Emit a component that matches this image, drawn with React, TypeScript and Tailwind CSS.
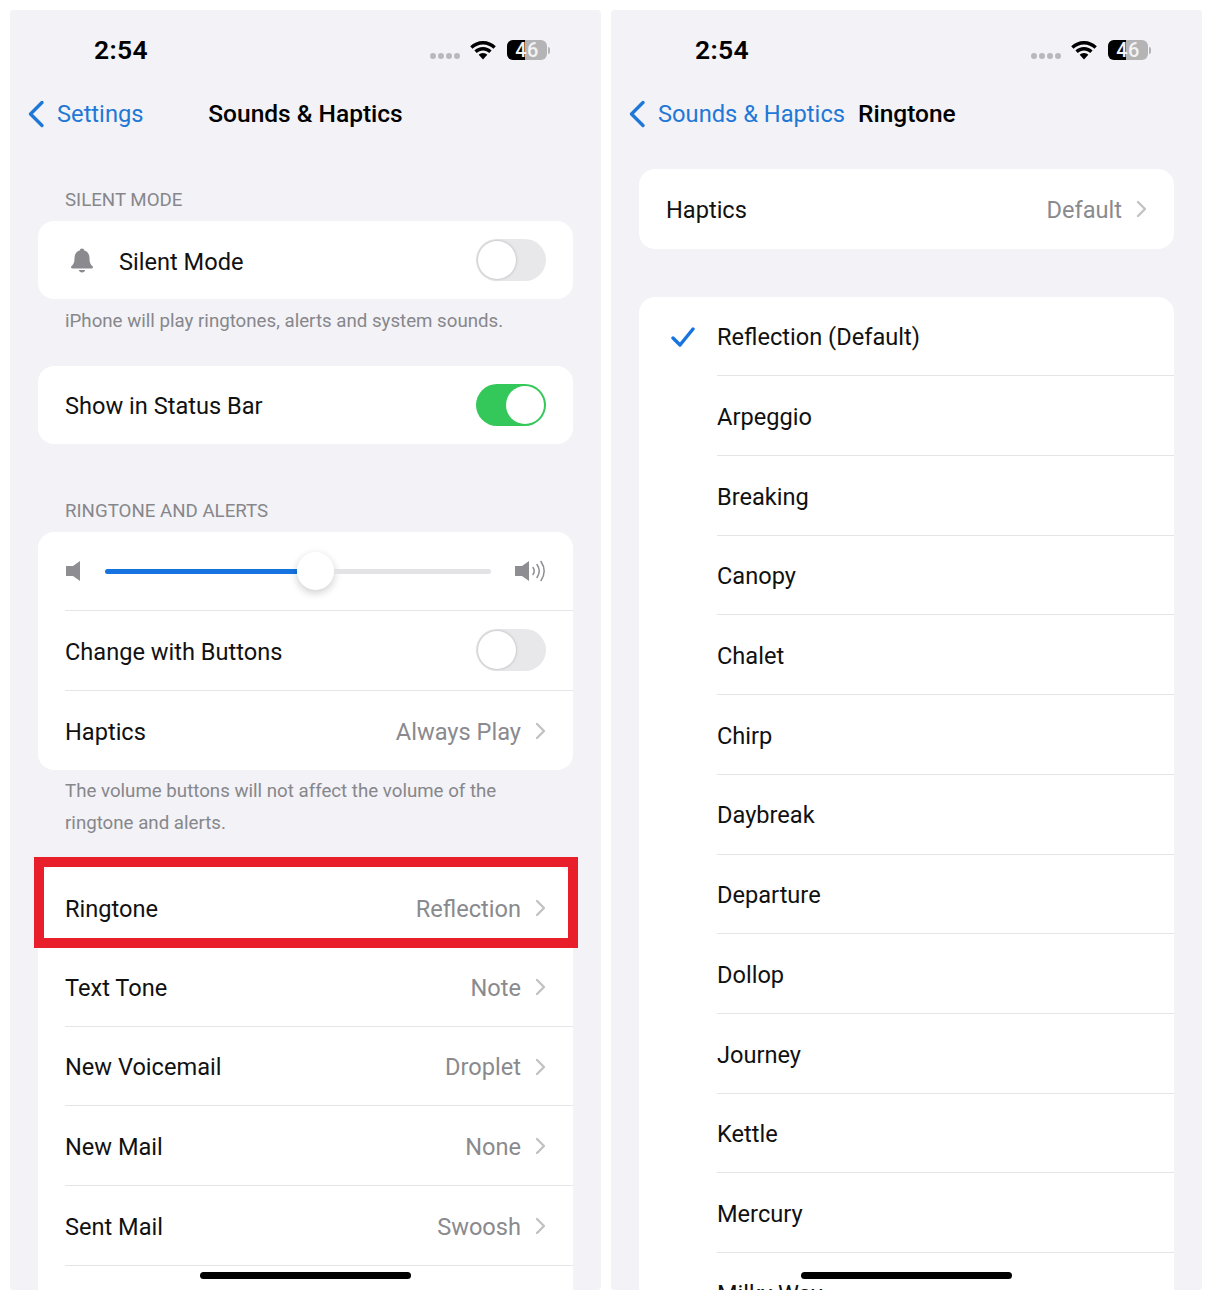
import type { ReactNode } from "react";

const font = "font-['Roboto',sans-serif]";

function BackChevron() {
  return (
    <svg width="18" height="28" viewBox="0 0 18 28" fill="none" className="shrink-0">
      <path d="M15 2.500 3.500 14 15 25.500" stroke="#1f78d6" strokeWidth="3.400" strokeLinecap="round" strokeLinejoin="round" />
    </svg>
  );
}

function Chevron() {
  return (
    <svg width="11" height="18" viewBox="0 0 11 18" fill="none" className="mt-[1px] shrink-0">
      <path d="M2 2l7 7-7 7" stroke="#c2c2c6" strokeWidth="2.400" strokeLinecap="round" strokeLinejoin="round" />
    </svg>
  );
}

function StatusBar() {
  return (
    <div className="flex h-[80px] items-center pl-[84px] pr-[51px]">
      <span className="text-[26.5px] font-semibold tracking-[0.3px] text-black">2:54</span>
      <div className="ml-auto flex items-center">
        <div className="mt-3 flex gap-[2px]">
          {[0, 1, 2, 3].map((i) => (
            <span key={i} className="h-[6px] w-[6px] rounded-full bg-[#b9b9bc]" />
          ))}
        </div>
        <svg width="28" height="20" viewBox="0 0 28 20" className="ml-[9px]">
          <path d="M14 1C9 1 4.600 3 1.200 6.200L3.500 8.700C6.300 6 10 4.400 14 4.400S21.700 6 24.500 8.700L26.800 6.200C23.400 3 19 1 14 1Z" fill="#000" />
          <path d="M14 7C10.600 7 7.600 8.300 5.400 10.500L7.800 13C9.400 11.400 11.600 10.400 14 10.400S18.600 11.400 20.200 13L22.600 10.500C20.400 8.300 17.400 7 14 7Z" fill="#000" />
          <path d="M14 13C12.300 13 10.800 13.700 9.700 14.800L14 19.400 18.300 14.800C17.200 13.700 15.700 13 14 13Z" fill="#000" />
        </svg>
        <div className="ml-[10px] flex items-center">
          <div className="relative flex h-[20px] w-[40px] items-center justify-center rounded-[6px] bg-[#b4b4b6]">
            <div className="absolute inset-y-0 left-0 w-[18px] rounded-l-[6px] bg-black" />
            <span className="relative text-[20px] font-medium leading-none tracking-[0.5px] text-[#f2f2f2]">46</span>
          </div>
          <div className="ml-[1px] h-[7px] w-[2px] rounded-r-full bg-[#b4b4b6]" />
        </div>
      </div>
    </div>
  );
}

function NavBar({ back, title }: { back: string; title: string }) {
  return (
    <div className="grid h-[48px] grid-cols-[1fr_auto_1fr] items-center">
      <div className="flex items-center gap-[12px] pl-[17px] text-[23.7px] text-[#1f78d6]">
        <BackChevron />
        <span className="whitespace-nowrap pt-[2px]">{back}</span>
      </div>
      <span className="px-[13px] text-[24.5px] font-medium text-black">{title}</span>
      <div />
    </div>
  );
}

function SectionHeader({ children, className }: { children: ReactNode; className: string }) {
  return <div className={`pl-[27px] text-[18.7px] leading-[24px] text-[#87878b] ${className}`}>{children}</div>;
}

function Footer({ children, className }: { children: ReactNode; className: string }) {
  return <div className={`pl-[27px] pr-[40px] text-[18.7px] leading-[32px] text-[#87878b] ${className}`}>{children}</div>;
}

function Card({ children, className = "" }: { children: ReactNode; className?: string }) {
  return <div className={`rounded-[16px] bg-white ${className}`}>{children}</div>;
}

function Toggle({ on = false }: { on?: boolean }) {
  if (on) {
    return (
      <div className="flex h-[42px] w-[70px] items-center justify-end rounded-full bg-[#34c759] pr-[2px]">
        <div className="h-[38px] w-[38px] rounded-full bg-white" />
      </div>
    );
  }
  return (
    <div className="flex h-[42px] w-[70px] items-center rounded-full bg-[#e8e8ea] pl-[2px]">
      <div className="h-[38px] w-[38px] rounded-full bg-white shadow-[0_0_3px_rgba(0,0,0,0.25)]" />
    </div>
  );
}

function Row({
  label,
  value,
  toggle,
  last = false,
  compact = false,
}: {
  label: string;
  value?: string;
  toggle?: ReactNode;
  last?: boolean;
  compact?: boolean;
}) {
  return (
    <div className={`ml-[27px] flex items-center pr-[27px] text-[23.6px] text-[#111] ${compact ? "h-[78px]" : "h-[79.7px]"} ${last ? "" : "border-b border-[#e5e5e7]"}`}>
      <span className="pt-[4px]">{label}</span>
      {value && (
        <div className="ml-auto flex items-center gap-[14px]">
          <span className="pt-[4px] text-[#8a8a8e]">{value}</span>
          <Chevron />
        </div>
      )}
      {toggle && <div className="ml-auto">{toggle}</div>}
    </div>
  );
}

function VolumeSlider() {
  return (
    <div className="ml-[27px] flex h-[79px] items-center border-b border-[#e5e5e7] pr-[27px]">
      <svg width="16" height="22" viewBox="0 0 16 22">
        <path d="M15 1v20l-7-5H1V6h7z" fill="#8e8e92" />
      </svg>
      <div className="ml-[24px] flex flex-1 items-center">
        <div className="h-[5px] w-[192px] rounded-l-full bg-[#1673e0]" />
        <div className="h-[38px] w-[37px] shrink-0 rounded-full bg-white shadow-[0_3px_8px_rgba(0,0,0,0.2)]" />
        <div className="h-[5px] flex-1 rounded-r-full bg-[#e3e3e5]" />
      </div>
      <svg width="32" height="24" viewBox="0 0 32 24" className="ml-[23px]">
        <path d="M15 2v20l-7-5H1V7h7z" fill="#8e8e92" />
        <path d="M19 8.500c1.500 2.200 1.500 4.800 0 7M23 5.500c2.800 4 2.800 9 0 13M27 2.500c4 6 4 13 0 19" fill="none" stroke="#8e8e92" strokeWidth="1.500" strokeLinecap="round" />
      </svg>
    </div>
  );
}

function SoundsScreen() {
  return (
    <div className="px-[28px]">
      <SectionHeader className="pt-[50px]">SILENT MODE</SectionHeader>
      <Card className="mt-[9px] flex h-[78px] items-center pl-[31px] pr-[27px]">
        <svg width="26" height="26" viewBox="0 0 26 26">
          <path d="M13 1.500c-1.300 0-2.200.9-2.300 2C7.200 4.500 5.500 7.500 5.500 11c0 4.500-1 6.300-2.600 7.800-.7.700-.9 1.100-.9 1.500 0 .7.500 1.200 1.300 1.200h19.400c.8 0 1.300-.5 1.300-1.200 0-.4-.2-.8-.9-1.500-1.600-1.500-2.600-3.300-2.600-7.800 0-3.500-1.700-6.500-5.200-7.500-.1-1.100-1-2-2.300-2z" fill="#8b8b8f" />
          <path d="M9.800 23c.3 1.500 1.600 2.500 3.200 2.500s2.900-1 3.200-2.500z" fill="#8b8b8f" />
        </svg>
        <span className="ml-[24px] pt-[5px] text-[23.6px] text-[#111]">Silent Mode</span>
        <div className="ml-auto">
          <Toggle />
        </div>
      </Card>
      <Footer className="mt-[6px]">iPhone will play ringtones, alerts and system sounds.</Footer>
      <Card className="mt-[29px]">
        <Row label="Show in Status Bar" toggle={<Toggle on />} last compact />
      </Card>
      <SectionHeader className="mt-[55px]">RINGTONE AND ALERTS</SectionHeader>
      <Card className="mt-[9px]">
        <VolumeSlider />
        <Row label="Change with Buttons" toggle={<Toggle />} />
        <Row label="Haptics" value="Always Play" last />
      </Card>
      <Footer className="mt-[5px]">
        The volume buttons will not affect the volume of the ringtone and alerts.
      </Footer>
      <Card className="mt-[28px]">
        <div className="relative">
          <Row label="Ringtone" value="Reflection" last />
          <div className="absolute -left-[4px] -right-[5px] -top-[10px] h-[91px] border-[10px] border-[#e81f2b]" />
        </div>
        <Row label="Text Tone" value="Note" />
        <Row label="New Voicemail" value="Droplet" />
        <Row label="New Mail" value="None" />
        <Row label="Sent Mail" value="Swoosh" />
        <div className="h-[79.7px]" />
      </Card>
    </div>
  );
}

const tones = [
  "Arpeggio",
  "Breaking",
  "Canopy",
  "Chalet",
  "Chirp",
  "Daybreak",
  "Departure",
  "Dollop",
  "Journey",
  "Kettle",
  "Mercury",
];

function RingtoneRow({ label, checked = false, last = false }: { label: string; checked?: boolean; last?: boolean }) {
  return (
    <div className="flex h-[79.7px]">
      <div className="flex w-[78px] shrink-0 items-center justify-end pr-[22px]">
        {checked && (
          <svg width="24" height="20" viewBox="0 0 24 20" fill="none">
            <path d="M2 11l7 7L22 2" stroke="#1673e0" strokeWidth="3.400" strokeLinecap="round" strokeLinejoin="round" />
          </svg>
        )}
      </div>
      <div className={`flex flex-1 items-center pt-[4px] text-[23.6px] text-[#111] ${last ? "" : "border-b border-[#e5e5e7]"}`}>
        {label}
      </div>
    </div>
  );
}

function RingtoneScreen() {
  return (
    <div className="px-[28px]">
      <Card className="mt-[31px]">
        <Row label="Haptics" value="Default" last />
      </Card>
      <Card className="mt-[48px]">
        <RingtoneRow label="Reflection (Default)" checked />
        {tones.map((t) => (
          <RingtoneRow key={t} label={t} />
        ))}
        <RingtoneRow label="Milky Way" last />
      </Card>
    </div>
  );
}

function Phone({ back, title, children }: { back: string; title: string; children: ReactNode }) {
  return (
    <div className="relative h-[1280px] w-[591px] overflow-hidden rounded-[4px] bg-[#f2f2f7]">
      <StatusBar />
      <NavBar back={back} title={title} />
      {children}
      <div className="absolute bottom-[11px] left-[190px] h-[7px] w-[211px] rounded-full bg-black" />
    </div>
  );
}

export default function App() {
  return (
    <div className={`flex min-h-[1300px] gap-[10px] bg-white p-[10px] ${font}`}>
      <Phone back="Settings" title="Sounds & Haptics">
        <SoundsScreen />
      </Phone>
      <Phone back="Sounds & Haptics" title="Ringtone">
        <RingtoneScreen />
      </Phone>
    </div>
  );
}
